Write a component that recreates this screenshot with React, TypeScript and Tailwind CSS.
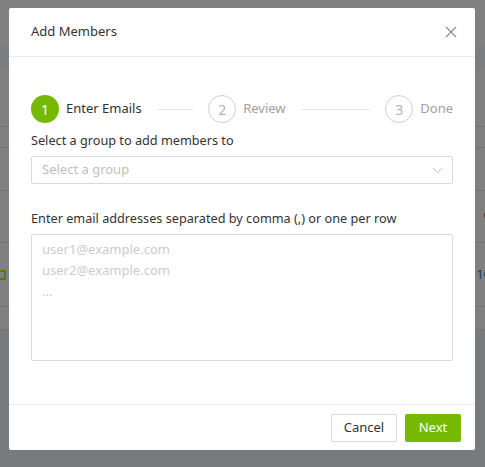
import React from "react";

function Step({ n, label, active, last }: { n: number; label: string; active?: boolean; last?: boolean }) {
  return (
    <div className={last ? "flex items-center shrink-0" : "flex items-center flex-1 min-w-0"}>
      <div
        className={
          active
            ? "w-[28px] h-[28px] shrink-0 rounded-full bg-[#76b900] text-white flex items-center justify-center text-[14px]"
            : "w-[28px] h-[28px] shrink-0 rounded-full border border-[#cfcfcf] text-[#b5b5b5] flex items-center justify-center text-[14px]"
        }
      >
        {n}
      </div>
      <span className={active ? "ml-[7px] text-[13px] text-[#333] shrink-0" : "ml-[7px] text-[13px] text-[#a0a0a0] shrink-0"}>{label}</span>
      {!last && <div className="flex-1 h-px bg-[#e6e6e6] mx-[15px]" />}
    </div>
  );
}

export default function App() {
  return (
    <div
      className="relative w-[485px] h-[467px] overflow-hidden bg-[#808080]"
      style={{ fontFamily: '"Noto Sans", "Open Sans", sans-serif' }}
    >
      {/* underlying page, dimmed */}
      <div className="flex flex-col">
        <div className="h-[47px]" />
        <div className="h-[21px] bg-[#7b7d80]" />
        <div className="h-[59px] border-b border-[#737373]" />
        <div className="h-[21px] border-b border-[#737373]" />
        <div className="h-[43px] border-b border-[#737373]" />
        <div className="h-[52px] border-b border-[#737373] flex items-end justify-end pb-[18px]">
          <span className="text-[13px] text-[#333] mr-[-6px]">o</span>
        </div>
        <div className="h-[64px] border-b border-[#737373] flex items-center justify-between">
          <div className="w-[8px] h-[10px] border-2 border-[#4f7a1a] ml-[-2px]" />
          <span className="text-[13px] text-[#1f3a60] mr-[-6px]">10</span>
        </div>
        <div className="h-[23px] border-b border-[#737373]" />
        <div className="h-[140px] bg-[#797a7c]" />
      </div>

      {/* modal */}
      <div className="absolute left-[9px] top-[8px] w-[466px] h-[442px] bg-white rounded-[2px] flex flex-col">
        <div className="h-[49px] border-b border-[#ebebeb] flex items-center justify-between pl-[22px] pr-[14px] shrink-0">
          <span className="text-[13px] text-[#333]">Add Members</span>
          <svg width="14" height="14" viewBox="0 0 14 14" className="mr-[3px]">
            <path d="M2 2 L12 12 M12 2 L2 12" stroke="#8c8c8c" strokeWidth="1.2" fill="none" />
          </svg>
        </div>
        <div className="flex-1 flex flex-col px-[22px] pt-[38px]">
          <div className="flex items-center">
            <Step n={1} label="Enter Emails" active />
            <Step n={2} label="Review" />
            <Step n={3} label="Done" last />
          </div>
          <div className="mt-[8px] text-[12.7px] text-[#333] leading-[18px]">Select a group to add members to</div>
          <div className="mt-[7px] h-[28px] border border-[#d9d9d9] rounded-[2px] flex items-center justify-between pl-[10px] pr-[9px]">
            <span className="text-[13px] text-[#bfbfbf]">Select a group</span>
            <svg width="11" height="7" viewBox="0 0 11 7">
              <path d="M1 1 L5.5 5.5 L10 1" stroke="#c4c4c4" strokeWidth="1" fill="none" />
            </svg>
          </div>
          <div className="mt-[25px] text-[12.7px] text-[#333] leading-[18px]">Enter email addresses separated by comma (,) or one per row</div>
          <div className="mt-[7px] h-[127px] border border-[#d9d9d9] rounded-[2px] pl-[10px] pt-[4px] text-[13px] text-[#cccccc] leading-[21px]">
            <div>user1@example.com</div>
            <div>user2@example.com</div>
            <div>...</div>
          </div>
        </div>
        <div className="h-[46px] border-t border-[#ebebeb] flex items-center justify-end gap-[8px] pr-[14px] shrink-0">
          <button className="h-[28px] w-[66px] border border-[#d9d9d9] rounded-[2px] bg-white text-[13px] text-[#333]">Cancel</button>
          <button className="h-[28px] w-[56px] rounded-[2px] bg-[#76b900] text-[13px] text-white">Next</button>
        </div>
      </div>
    </div>
  );
}
